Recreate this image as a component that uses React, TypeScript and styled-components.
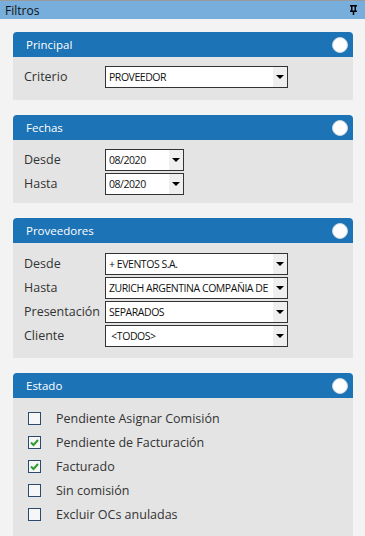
import styled, { createGlobalStyle } from "styled-components";

const GlobalStyle = createGlobalStyle`
  html, body {
    margin: 0;
    padding: 0;
    background: #f3f3f3;
  }
  body {
    font-family: "Open Sans", "Noto Sans", "DejaVu Sans", sans-serif;
  }
`;

type Option = { label: string; value: string; width?: number };

const PinIcon = () => (
  <svg width="7" height="10" viewBox="0 0 7 10">
    <rect x="0" y="0" width="7" height="1.5" fill="#000" />
    <rect x="1" y="1" width="1.5" height="5" fill="#000" />
    <rect x="4.5" y="1" width="1.5" height="5" fill="#000" />
    <rect x="0" y="5.5" width="7" height="1.5" fill="#000" />
    <rect x="2.75" y="6.5" width="1.5" height="3.5" fill="#000" />
  </svg>
);

const CheckMark = () => (
  <svg width="11" height="11" viewBox="0 0 11 11">
    <path d="M2 5.5 L4.5 8 L9 3" fill="none" stroke="#2f9a2f" strokeWidth="2" />
  </svg>
);

const Select = ({ value, width = 183 }: { value: string; width?: number }) => (
  <SelectBox $width={width}>
    <SelectText>{value}</SelectText>
    <SelectArrow>
      <Triangle />
    </SelectArrow>
  </SelectBox>
);

const Panel = ({ title, children, $pad }: { title: string; children: React.ReactNode; $pad?: string }) => (
  <PanelBox>
    <PanelHeader>
      <PanelTitle>{title}</PanelTitle>
      <Knob />
    </PanelHeader>
    <PanelBody $pad={$pad}>{children}</PanelBody>
  </PanelBox>
);

const FieldRows = ({ rows }: { rows: Option[] }) => (
  <Rows>
    {rows.map((r) => (
      <Row key={r.label}>
        <Label>{r.label}</Label>
        <Select value={r.value} width={r.width} />
      </Row>
    ))}
  </Rows>
);

const estados = [
  { label: "Pendiente Asignar Comisión", checked: false },
  { label: "Pendiente de Facturación", checked: true },
  { label: "Facturado", checked: true },
  { label: "Sin comisión", checked: false },
  { label: "Excluir OCs anuladas", checked: false },
];

const App = () => {
  return (
    <Page>
      <GlobalStyle />
      <TitleBar>
        <TitleText>Filtros</TitleText>
        <PinIcon />
      </TitleBar>
      <Content>
        <Panel title="Principal" $pad="9px 0 12px">
          <FieldRows rows={[{ label: "Criterio", value: "PROVEEDOR" }]} />
        </Panel>
        <Panel title="Fechas" $pad="9px 0 8px">
          <FieldRows
            rows={[
              { label: "Desde", value: "08/2020", width: 79 },
              { label: "Hasta", value: "08/2020", width: 79 },
            ]}
          />
        </Panel>
        <Panel title="Proveedores" $pad="10px 0 11px">
          <FieldRows
            rows={[
              { label: "Desde", value: "+ EVENTOS S.A." },
              { label: "Hasta", value: "ZURICH ARGENTINA COMPAÑIA DE" },
              { label: "Presentación", value: "SEPARADOS" },
              { label: "Cliente", value: " <TODOS>" },
            ]}
          />
        </Panel>
        <Panel title="Estado" $pad="8px 0 20px">
          <Checks>
            {estados.map((e) => (
              <CheckRow key={e.label}>
                <CheckBox>{e.checked && <CheckMark />}</CheckBox>
                <CheckLabel>{e.label}</CheckLabel>
              </CheckRow>
            ))}
          </Checks>
        </Panel>
      </Content>
    </Page>
  );
};

const Page = styled.div`
  width: 365px;
  height: 536px;
  overflow: hidden;
  background: #f3f3f3;
`;
const TitleBar = styled.div`
  height: 18px;
  border-top: 1px solid #9a9a9a;
  background: #78aedb;
  display: flex;
  align-items: center;
  justify-content: space-between;
  padding: 0 8px 0 5px;
`;
const TitleText = styled.span`
  font-size: 12px;
  color: #111;
`;
const Content = styled.div`
  display: flex;
  flex-direction: column;
  gap: 15px;
  padding: 13px 12px 0 13px;
`;
const PanelBox = styled.div`
  display: flex;
  flex-direction: column;
`;
const PanelHeader = styled.div`
  height: 25px;
  background: #1c73b6;
  border-radius: 4px 4px 0 0;
  display: flex;
  align-items: center;
  justify-content: space-between;
  padding: 0 5px 0 13px;
`;
const PanelTitle = styled.span`
  font-size: 11.5px;
  color: #fff;
`;
const Knob = styled.div`
  width: 14px;
  height: 14px;
  border-radius: 50%;
  background: #fff;
  border: 1px solid #c8d4de;
`;
const PanelBody = styled.div<{ $pad?: string }>`
  background: #e4e4e4;
  padding: ${(p) => p.$pad || "9px 0"};
`;
const Rows = styled.div`
  display: flex;
  flex-direction: column;
  gap: 2px;
  padding-left: 11px;
`;
const Row = styled.div`
  display: flex;
  align-items: center;
  height: 22px;
`;
const Label = styled.span`
  width: 81px;
  font-size: 12.5px;
  line-height: 16px;
  color: #333;
  white-space: nowrap;
`;
const SelectBox = styled.div<{ $width: number }>`
  width: ${(p) => p.$width}px;
  height: 22px;
  box-sizing: border-box;
  border: 1px solid #333;
  background: #fff;
  display: flex;
  align-items: stretch;
`;
const SelectText = styled.span`
  flex: 1;
  font-size: 10.5px;
  color: #111;
  padding-left: 3px;
  line-height: 20px;
  white-space: pre;
  overflow: hidden;
  letter-spacing: -0.45px;
`;
const SelectArrow = styled.div`
  width: 14px;
  background: #efefef;
  display: flex;
  align-items: center;
  justify-content: center;
`;
const Triangle = styled.div`
  width: 0;
  height: 0;
  border-left: 4px solid transparent;
  border-right: 4px solid transparent;
  border-top: 4px solid #000;
`;
const Checks = styled.div`
  display: flex;
  flex-direction: column;
  padding-left: 15px;
`;
const CheckRow = styled.div`
  height: 24px;
  display: flex;
  align-items: center;
`;
const CheckBox = styled.div`
  width: 11px;
  height: 11px;
  border: 1px solid #2a4a6e;
  background: #f6f6f6;
  margin-right: 15px;
  display: flex;
  align-items: center;
  justify-content: center;
`;
const CheckLabel = styled.span`
  font-size: 12.5px;
  color: #333;
`;

export default App;
